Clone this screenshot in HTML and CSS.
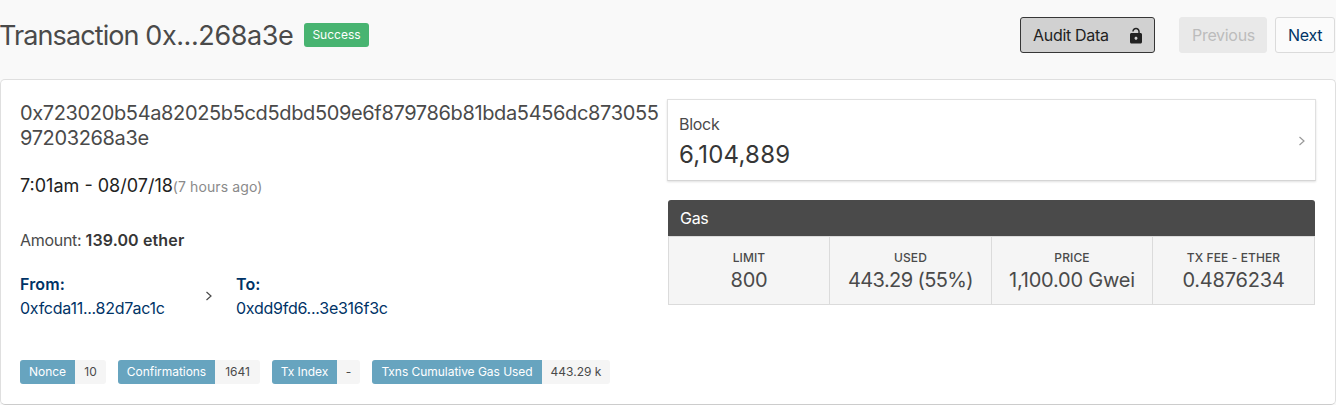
FILE: index.html
```html
<!DOCTYPE html>
<html lang="en">
<head>
<meta charset="utf-8">
<title>Transaction</title>
<link rel="stylesheet" href="styles.css">
</head>
<body>
<header class="header">
  <h1 class="title">Transaction <span class="title-hash">0x...268a3e</span></h1>
  <span class="tag-success">Success</span>
  <nav class="actions">
    <button class="btn btn-audit"><span class="audit-label">Audit Data</span>
      <svg class="lock" viewBox="0 0 24 24"><path fill="currentColor" d="M18 8h-1V6c0-2.760-2.240-5-5-5S7 3.240 7 6h1.900c0-1.710 1.390-3.100 3.100-3.100s3.100 1.390 3.100 3.100v2H6c-1.100 0-2 .9-2 2v10c0 1.100.9 2 2 2h12c1.100 0 2-.9 2-2V10c0-1.100-.9-2-2-2zm-6 9c-1.100 0-2-.9-2-2s.9-2 2-2 2 .9 2 2-.9 2-2 2z"/></svg>
    </button>
    <button class="btn btn-prev">Previous</button>
    <button class="btn btn-next">Next</button>
  </nav>
</header>
<main class="card">
  <section class="details">
    <h2 class="hash">0x723020b54a82025b5cd5dbd509e6f879786b81bda5456dc873055<br>97203268a3e</h2>
    <p class="time"><span class="date">7:01am - 08/07/18</span><span class="ago">(7 hours ago)</span></p>
    <p class="amount">Amount: <strong>139.00 ether</strong></p>
    <div class="parties">
      <a class="party from"><strong>From:</strong><span class="address">0xfcda11...82d7ac1c</span></a>
      <svg class="arrow" viewBox="0 0 8 10"><path d="M1.500 1 6 5 1.500 9"/></svg>
      <a class="party"><strong>To:</strong><span class="address">0xdd9fd6...3e316f3c</span></a>
    </div>
    <div class="tags">
      <div class="tag-pair nonce"><span class="tag-key">Nonce</span><span class="tag-value">10</span></div>
      <div class="tag-pair confirmations"><span class="tag-key">Confirmations</span><span class="tag-value">1641</span></div>
      <div class="tag-pair tx-index"><span class="tag-key">Tx Index</span><span class="tag-value">-</span></div>
      <div class="tag-pair cumulative"><span class="tag-key">Txns Cumulative Gas Used</span><span class="tag-value">443.29 k</span></div>
    </div>
  </section>
  <section class="side">
    <a class="block">
      <div><div class="block-label">Block</div><div class="block-number">6,104,889</div></div>
      <svg class="arrow block-arrow" viewBox="0 0 8 10"><path d="M1.500 1 6 5 1.500 9"/></svg>
    </a>
    <div class="gas">
      <div class="gas-head">Gas</div>
      <div class="gas-grid">
        <div class="cell"><div class="cell-label">LIMIT</div><div class="cell-value">800</div></div>
        <div class="cell"><div class="cell-label">USED</div><div class="cell-value used">443.29 (55%)</div></div>
        <div class="cell"><div class="cell-label">PRICE</div><div class="cell-value">1,100.00 Gwei</div></div>
        <div class="cell"><div class="cell-label">TX FEE - ETHER</div><div class="cell-value">0.4876234</div></div>
      </div>
    </div>
  </section>
</main>
</body>
</html>
```
FILE: styles.css
```css
* { box-sizing: border-box; }
body {
  margin: 0;
  background: #f9f9f9;
  color: #4a4a4a;
  font: 16px/24px Inter, sans-serif;
  letter-spacing: -0.3px;
}
h1, h2, p { margin: 0; font-weight: 400; }
strong { font-weight: 600; letter-spacing: 0.13px; }

.header { height: 79px; display: flex; align-items: flex-start; padding: 17px 1px 0 0; }
.title { width: 293px; margin-left: -1px; font-size: 27px; line-height: 37px; letter-spacing: -0.9px; white-space: nowrap; }
.title-hash { letter-spacing: -0.42px; }
.tag-success {
  margin: 6px 0 0 12px; width: 65px; height: 24px; border-radius: 3px;
  background: #48b471; color: #fff; font-size: 12px; line-height: 24px;
  text-align: center; letter-spacing: 0;
}
.actions { margin-left: auto; display: flex; }
.btn {
  height: 36px; padding: 0 12px; border: 1px solid #dbdbdb; border-radius: 3px;
  font: inherit; letter-spacing: inherit; background: #fff; white-space: nowrap;
}
.btn-audit { width: 135px; display: flex; align-items: center; justify-content: space-between; background: #d1d1d1; border-color: #363636; color: #222; }
.lock { width: 18px; height: 18px; margin: 2px -3px 0 0; }
.btn-prev { width: 88px; margin-left: 24px; background: #e9e9e9; border-color: #e9e9e9; color: #bcbcbc; }
.btn-next { width: 60px; margin-left: 8px; background: #fbfbfb; color: #003366; }

.card {
  height: 326px; display: grid; grid-template-columns: 647px 649px; padding: 19px 0 0 19px;
  background: #fff; border: 1px solid #dfdfdf; border-bottom-color: #ccc; border-radius: 5px;
}
.hash { padding-top: 2px; font-size: 20px; line-height: 25px; letter-spacing: -0.36px; white-space: nowrap; }
.time { margin-top: 22px; line-height: 26px; white-space: nowrap; }
.date { font-size: 18px; color: #222; letter-spacing: 0; }
.ago { font-size: 14px; color: #8a8a8a; letter-spacing: 0.1px; }
.amount { margin-top: 28px; }
.amount strong { color: #363636; }
.parties { display: flex; align-items: center; margin-top: 20px; color: #003366; }
.party { display: flex; flex-direction: column; }
.from { width: 185px; }
.address { letter-spacing: -0.25px; }
.arrow { width: 8px; height: 10px; margin-right: 23px; fill: none; stroke: #4a4a4a; stroke-width: 1.2; }
.tags { display: flex; gap: 12px; margin-top: 40px; font-size: 12px; line-height: 24px; letter-spacing: 0; }
.tag-pair { display: flex; border-radius: 3px; overflow: hidden; background: #f5f5f5; text-align: center; white-space: nowrap; }
.tag-key { background: #67a4bf; color: #fff; letter-spacing: -0.04px; }
.tag-value { flex: 1; }
.nonce { width: 86px; }
.nonce .tag-key { width: 55px; }
.confirmations { width: 142px; }
.confirmations .tag-key { width: 97px; }
.tx-index { width: 88px; }
.tx-index .tag-key { width: 65px; }
.cumulative { width: 238px; }
.cumulative .tag-key { width: 170px; }

.block {
  height: 82px; display: flex; justify-content: space-between; align-items: center;
  padding: 0 9px 0 11px; border: 1px solid #e0e0e0; border-bottom-color: #d5d5d5;
  box-shadow: 0 1px 2px rgba(0, 0, 0, .12);
}
.block-label { padding-top: 3px; line-height: 24px; }
.block-number { font-size: 24px; line-height: 34px; padding-top: 2px; color: #363636; letter-spacing: 0.2px; }
.block-arrow { margin: 1px 0 0; stroke: #999; }
.gas { margin: 19px 0 0 1px; width: 647px; }
.gas-head { height: 36px; padding: 6px 12px; border-radius: 3px 3px 0 0; background: #4a4a4a; color: #fff; }
.gas-grid {
  display: grid; grid-template-columns: 161px 162px 161px 162px; height: 69px;
  border: solid #dbdbdb; border-width: 1px 0 1px 1px; background: #f5f5f5;
}
.cell { border-right: 1px solid #dbdbdb; padding-top: 12px; text-align: center; white-space: nowrap; }
.cell-label { font-size: 12px; line-height: 18px; font-weight: 500; letter-spacing: 0.1px; }
.cell-value { font-size: 20px; line-height: 27px; letter-spacing: -0.2px; }
.used { letter-spacing: -0.6px; }
```
